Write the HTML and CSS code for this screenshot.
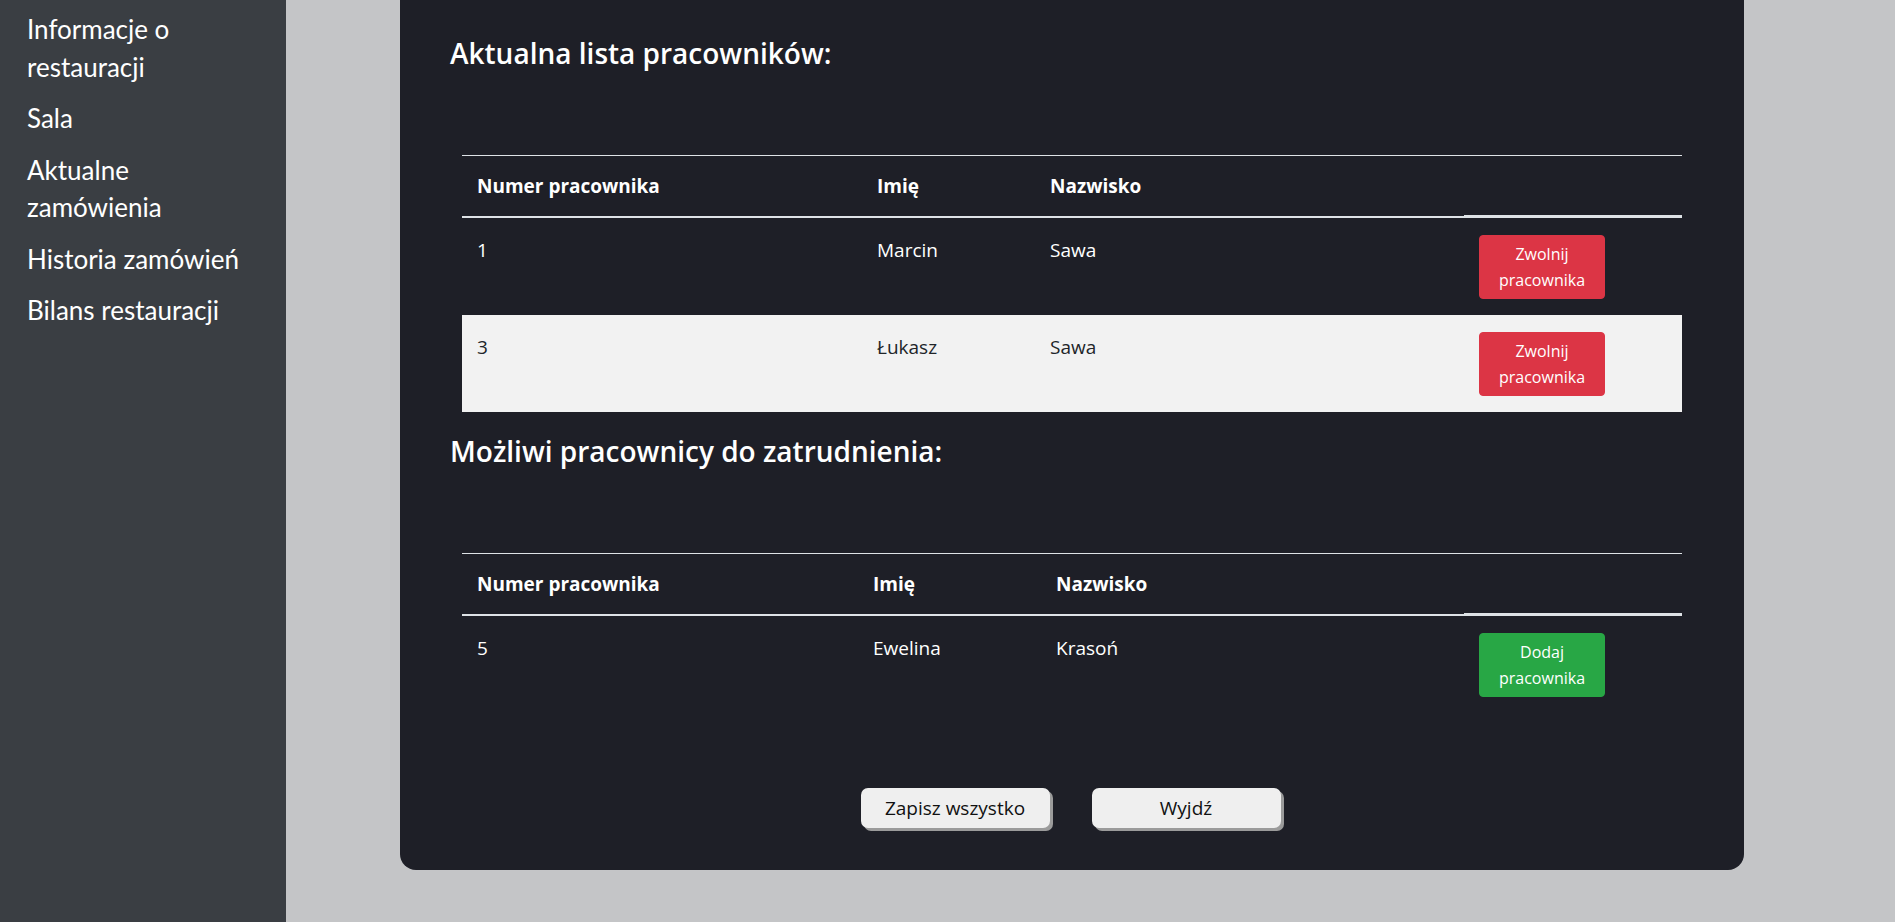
FILE: index.html
```html
<!DOCTYPE html>
<html lang="pl">
<head>
<meta charset="utf-8">
<title>Pracownicy</title>
<link rel="stylesheet" href="styles.css">
</head>
<body>
<div class="app">
  <nav class="sidebar">
    <a class="nav-link" href="#">Informacje o restauracji</a>
    <a class="nav-link" href="#">Sala</a>
    <a class="nav-link" href="#">Aktualne zamówienia</a>
    <a class="nav-link" href="#">Historia zamówień</a>
    <a class="nav-link" href="#">Bilans restauracji</a>
  </nav>
  <main class="main">
    <section class="card">
      <h2 class="title">Aktualna lista pracowników:</h2>
      <table class="table table-current">
        <colgroup>
          <col class="c-num"><col class="c-name"><col class="c-surname"><col class="c-action">
        </colgroup>
        <thead>
          <tr><th>Numer pracownika</th><th>Imię</th><th>Nazwisko</th><th class="th-last"></th></tr>
        </thead>
        <tbody>
          <tr>
            <td>1</td><td>Marcin</td><td>Sawa</td>
            <td><button class="btn btn-danger">Zwolnij pracownika</button></td>
          </tr>
          <tr class="row-light">
            <td>3</td><td>Łukasz</td><td>Sawa</td>
            <td><button class="btn btn-danger">Zwolnij pracownika</button></td>
          </tr>
        </tbody>
      </table>

      <h2 class="title">Możliwi pracownicy do zatrudnienia:</h2>
      <table class="table table-candidates">
        <colgroup>
          <col class="c-num"><col class="c-name"><col class="c-surname"><col class="c-action">
        </colgroup>
        <thead>
          <tr><th>Numer pracownika</th><th>Imię</th><th>Nazwisko</th><th class="th-last"></th></tr>
        </thead>
        <tbody>
          <tr>
            <td>5</td><td>Ewelina</td><td>Krasoń</td>
            <td><button class="btn btn-success">Dodaj pracownika</button></td>
          </tr>
        </tbody>
      </table>

      <div class="actions">
        <button class="btn-light">Zapisz wszystko</button>
        <button class="btn-light">Wyjdź</button>
      </div>
    </section>
  </main>
</div>
</body>
</html>
```

FILE: styles.css
```css
* { box-sizing: border-box; }

html, body {
  margin: 0;
  height: 100%;
}

body {
  font-family: "Open Sans", "Noto Sans", sans-serif;
  background: #c4c5c7;
  overflow: hidden;
}

.app {
  display: flex;
  min-height: 100vh;
}

.sidebar {
  width: 286px;
  flex-shrink: 0;
  background: #3a3e43;
  padding: 11px 40px 0 27px;
  display: flex;
  flex-direction: column;
  gap: 14px;
}

.nav-link {
  font-family: "Comic Sans MS", "Lato", sans-serif;
  font-size: 26px;
  line-height: 37.5px;
  color: #ffffff;
  text-decoration: none;
}

.main {
  flex: 1;
  padding-left: 114px;
}

.card {
  width: 1344px;
  background: #1e1f27;
  border-radius: 0 0 16px 16px;
  padding: 35px 50px 42px;
  color: #ffffff;
}

.title {
  margin: 0 0 84px;
  font-size: 28px;
  line-height: 36px;
  font-weight: 600;
}

.table {
  width: 1220px;
  margin: 0 12px 21px;
  border-collapse: separate;
  border-spacing: 0;
  table-layout: fixed;
  font-size: 19px;
  line-height: 30px;
}

.table-current .c-num { width: 400px; }
.table-current .c-name { width: 173px; }
.table-current .c-surname { width: 429px; }
.table-current .c-action { width: 218px; }

.table-candidates .c-num { width: 396px; }
.table-candidates .c-name { width: 183px; }
.table-candidates .c-surname { width: 423px; }
.table-candidates .c-action { width: 218px; }

.table th {
  text-align: left;
  font-weight: 700;
  padding: 15px;
  border-top: 1px solid #dee2e6;
  border-bottom: 2px solid #dee2e6;
}

.table th.th-last {
  border-bottom-width: 3px;
}

.table td {
  padding: 16px 15px;
  vertical-align: top;
  border-top: 1px solid #dee2e6;
}

.table thead + tbody tr:first-child td {
  border-top: 1px solid transparent;
}

.row-light td {
  background: #f2f2f2;
  color: #212529;
  border-top-color: #f2f2f2;
}

.btn {
  display: block;
  width: 126px;
  border: 1px solid transparent;
  border-radius: 4px;
  padding: 5px 12px;
  font-family: "Open Sans", "Noto Sans", sans-serif;
  font-size: 16px;
  line-height: 26px;
  color: #ffffff;
  text-align: center;
}

.btn-danger { background: #dc3545; border-color: #dc3545; }
.btn-success { background: #28a745; border-color: #28a745; }

.actions {
  display: flex;
  justify-content: center;
  gap: 42px;
  margin-top: 75px;
  padding-right: 3px;
}

.btn-light {
  width: 189px;
  height: 40px;
  border: none;
  border-radius: 7px;
  background: #efefef;
  box-shadow: 3px 3px 0 #9b9b9b;
  font-family: "Open Sans", "Noto Sans", sans-serif;
  font-size: 19px;
  color: #111111;
  padding: 0;
}
```
